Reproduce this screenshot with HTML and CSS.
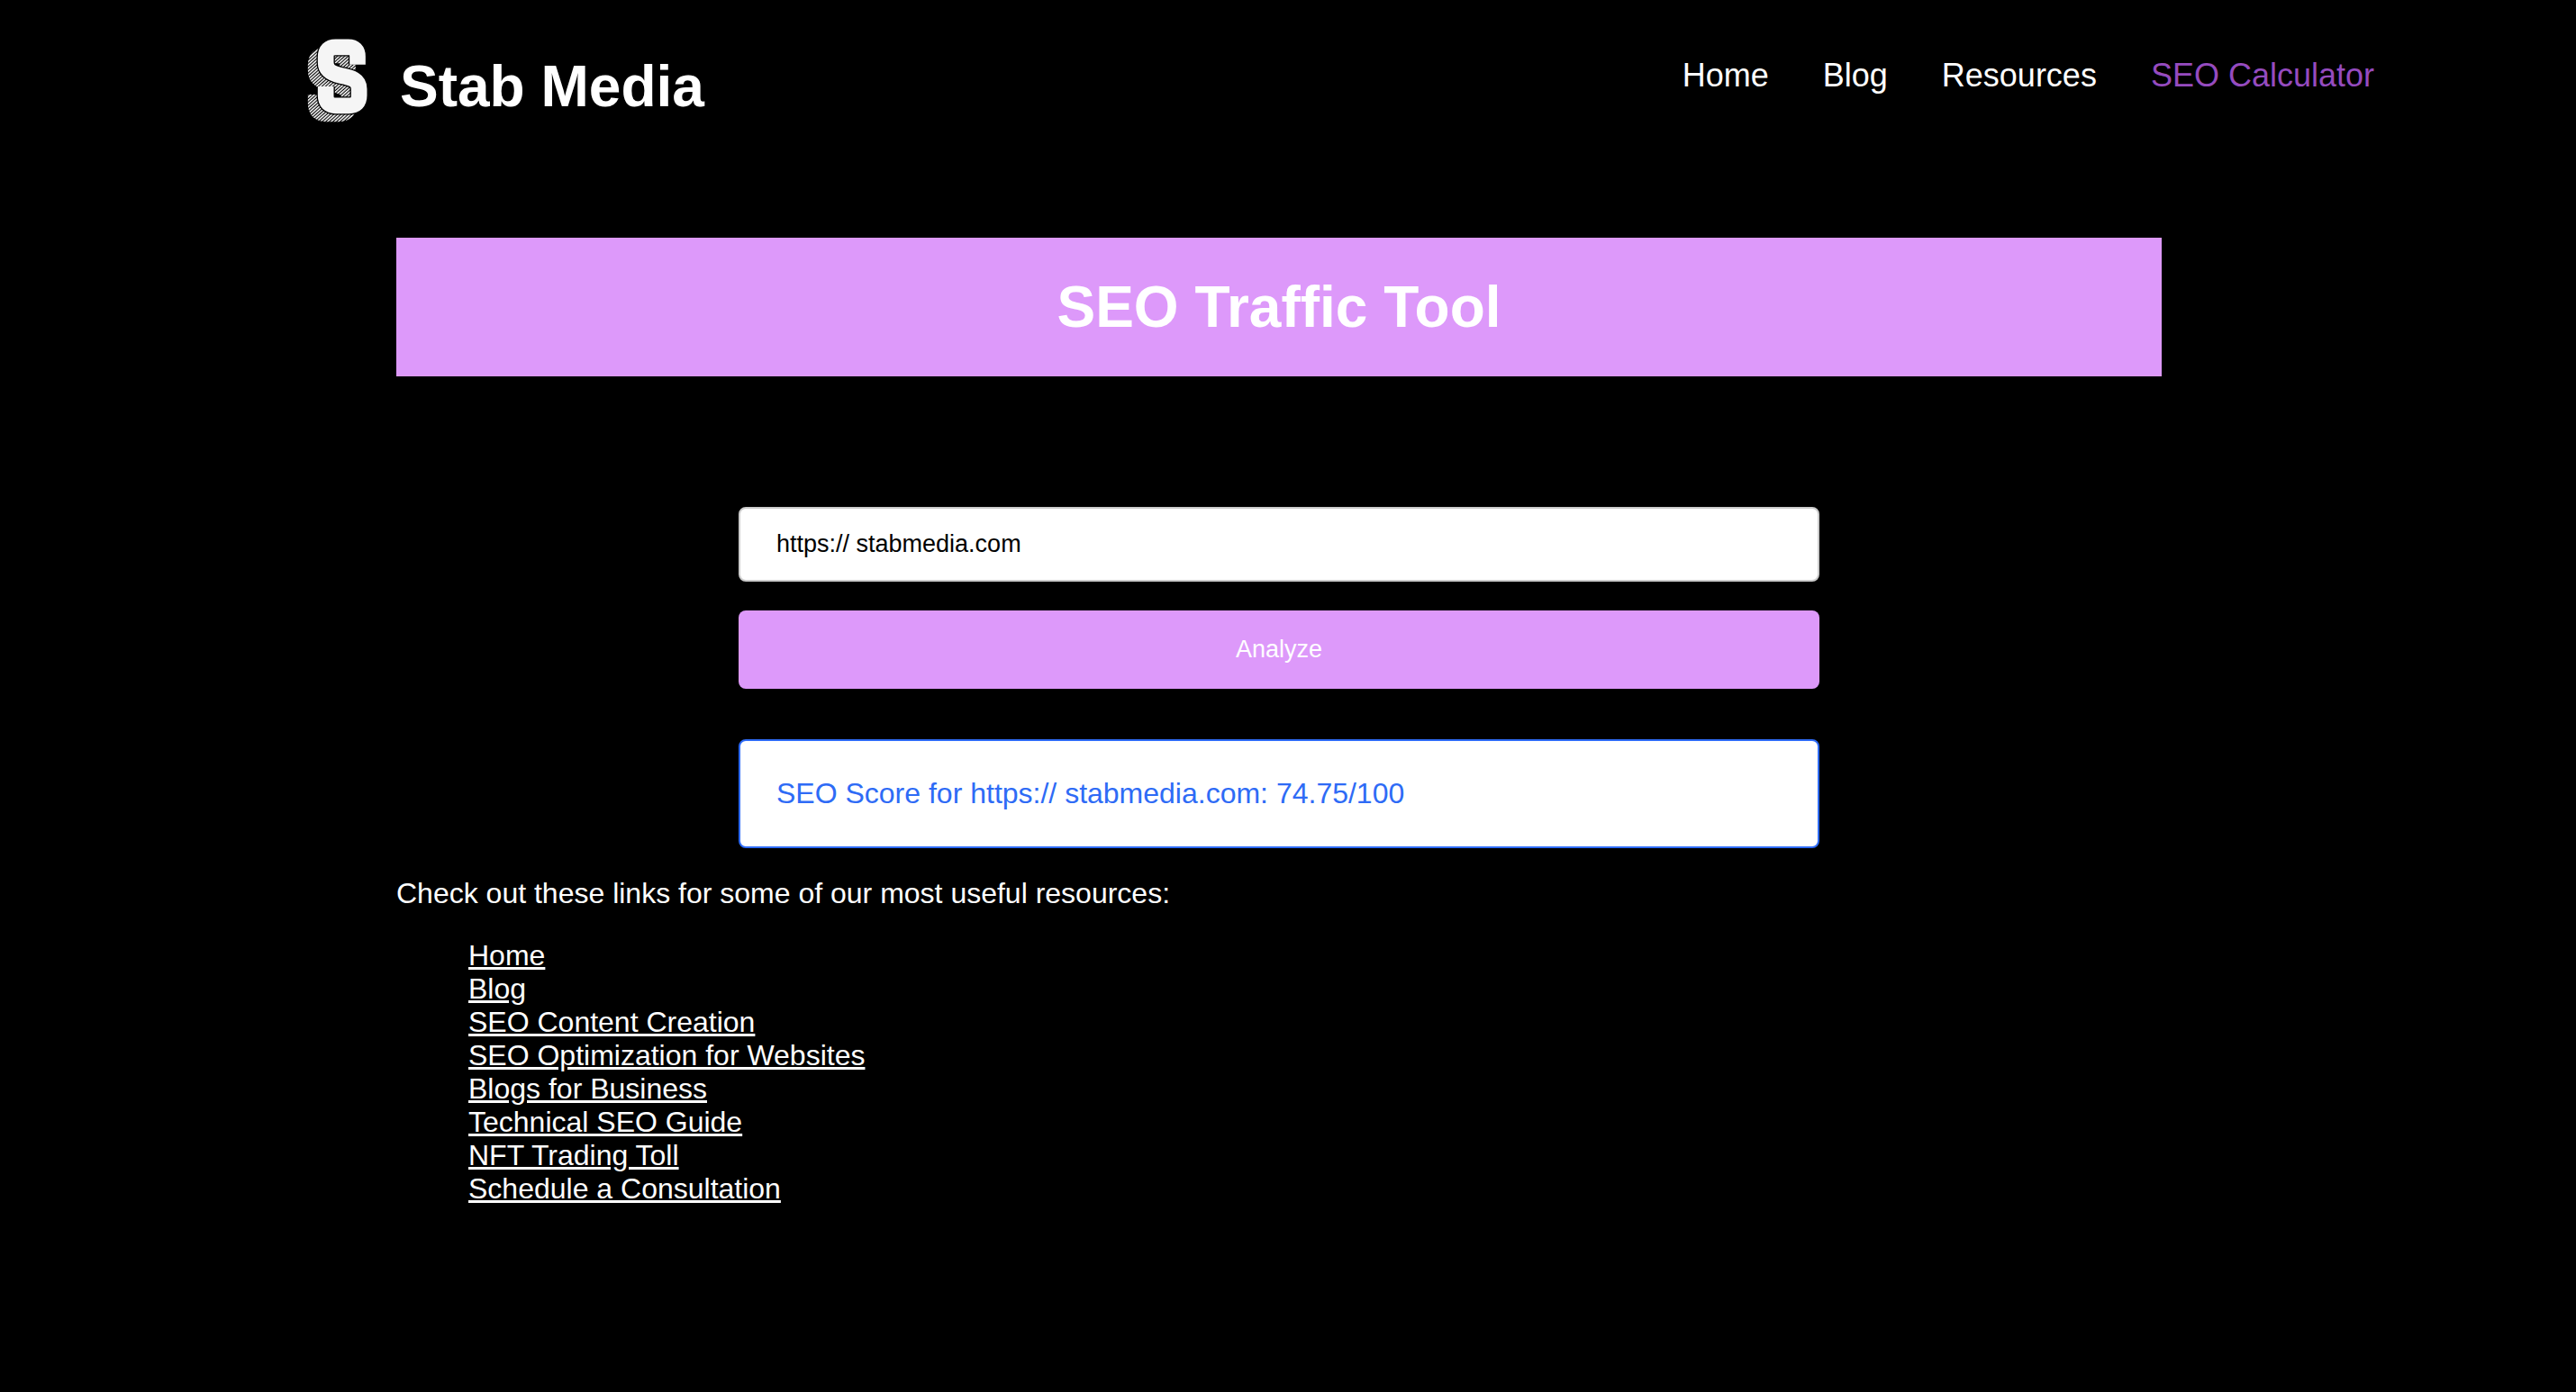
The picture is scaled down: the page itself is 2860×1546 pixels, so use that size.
FILE: index.html
```html
<!DOCTYPE html>
<html lang="en">
<head>
    <meta charset="UTF-8">
    <meta name="viewport" content="width=device-width, initial-scale=1.0">
    <title>SEO Traffic Tool</title>
    <link rel="stylesheet" href="styles.css">
</head>
<body>
    <header class="header">
        <div class="brand">
            <svg class="logo" viewBox="0 60 360 336" aria-hidden="true">
                <defs>
                    <pattern id="hatch" width="8" height="8" patternUnits="userSpaceOnUse" patternTransform="rotate(48)">
                        <rect width="4.6" height="8" fill="#fff"/>
                    </pattern>
                    <path id="mark" d="M231 155 V128 Q231 97 200 97 H158 Q125 97 125 130 V148 C125 176 146 186 176 192 C212 199 236 206 236 236 V258 Q236 292 202 292 H159 Q125 292 125 258 V228"/>
                </defs>
                <use href="#mark" class="logo-shadow" x="-33" y="27" stroke="url(#hatch)"/>
                <use href="#mark" class="logo-gap"/>
                <use href="#mark" class="logo-face"/>
            </svg>
            <span class="brand-name">Stab Media</span>
        </div>
        <nav class="nav">
            <a href="#home">Home</a>
            <a href="#blog">Blog</a>
            <a href="#resources">Resources</a>
            <a href="#calculator" class="active">SEO Calculator</a>
        </nav>
    </header>

    <main class="container">
        <h1 class="banner">SEO Traffic Tool</h1>

        <form class="seo-form" id="seo-form">
            <input type="text" id="url" aria-label="Website URL" value="https:// stabmedia.com">
            <button type="button">Analyze</button>
        </form>
        <div class="result" id="result">SEO Score for https:// stabmedia.com: 74.75/100</div>

        <p>Check out these links for some of our most useful resources:</p>
        <ul class="links">
            <li><a href="#home">Home</a></li>
            <li><a href="#blog">Blog</a></li>
            <li><a href="#content">SEO Content Creation</a></li>
            <li><a href="#optimization">SEO Optimization for Websites</a></li>
            <li><a href="#business">Blogs for Business</a></li>
            <li><a href="#technical">Technical SEO Guide</a></li>
            <li><a href="#nft">NFT Trading Toll</a></li>
            <li><a href="#consultation">Schedule a Consultation</a></li>
        </ul>
    </main>
</body>
</html>
```

FILE: styles.css
```css
* {
    box-sizing: border-box;
}
body {
    margin: 0;
    padding-right: 20px;
    background-color: #000;
    color: #fff;
    font-family: "Liberation Sans", Arial, sans-serif;
    font-size: 32px;
}

/* Header */
.header {
    display: flex;
    flex-wrap: wrap;
    justify-content: space-between;
    align-items: flex-start;
    padding: 40px 204px 0 320px;
}
.brand {
    display: flex;
    align-items: center;
    gap: 4px;
}
.logo {
    width: 120px;
    height: 112px;
}
.logo use {
    fill: none;
    stroke-width: 53px;
}
.logo .logo-gap {
    stroke: #000;
    stroke-width: 61px;
}
.logo .logo-face {
    stroke: #f5f5f5;
}
.brand-name {
    font-size: 64px;
    font-weight: bold;
}
.nav {
    display: flex;
    gap: 60px;
    padding-top: 23px;
    font-size: 36px;
}
.nav a {
    color: #fff;
    text-decoration: none;
}
.nav .active {
    color: #954bbf;
}

/* Content */
.container {
    max-width: 1960px;
    margin: 112px auto 0;
}
.banner {
    margin: 0 0 145px;
    padding: 40px;
    background-color: #dd99fa;
    font-size: 64px;
    text-align: center;
}
.seo-form {
    display: flex;
    flex-direction: column;
    gap: 32px;
    max-width: 1200px;
    margin: 0 auto 56px;
}
.seo-form input,
.seo-form button {
    width: 100%;
    border-radius: 8px;
    font-family: inherit;
    font-size: 27px;
    line-height: 31px;
}
.seo-form input {
    padding: 24px 40px;
    border: 2px solid #ccc;
    background-color: #fff;
    color: #000;
}
.seo-form button {
    padding: 28px 40px;
    border: none;
    background-color: #dd99fa;
    color: #fff;
    cursor: pointer;
}
.result {
    max-width: 1200px;
    margin: 0 auto;
    padding: 40px;
    border: 2px solid #2e6bf6;
    border-radius: 8px;
    background-color: #fff;
    color: #2e6bf6;
}
.container p {
    margin: 32px 0;
}
.links {
    margin: 0;
    padding-left: 80px;
    list-style: none;
}
.links a {
    color: #fff;
}
```
